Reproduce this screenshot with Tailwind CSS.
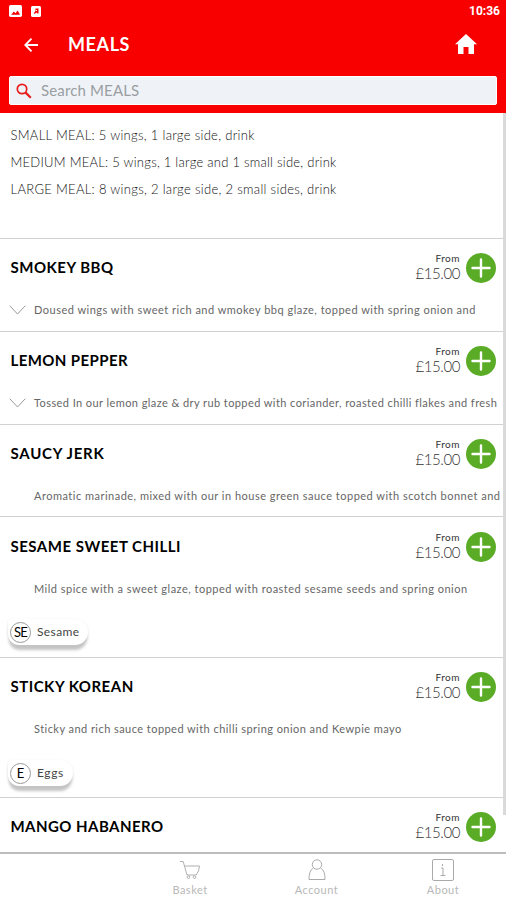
<!DOCTYPE html>
<html lang="en">
<head>
<meta charset="utf-8">
<title>Meals</title>
<script src="https://cdn.jsdelivr.net/npm/@tailwindcss/browser@4"></script>
</head>
<body class="w-[506px] h-[900px] overflow-hidden bg-white font-['Lato','Open_Sans',sans-serif] text-black">
<svg class="hidden">
  <symbol id="plus" viewBox="0 0 30 30"><circle cx="15" cy="15" r="15" fill="#5aac27"/><path d="M15 6.500v17M6.500 15h17" stroke="#fff" stroke-width="2.400" stroke-linecap="round"/></symbol>
  <symbol id="chev" viewBox="0 0 17 10"><path d="M.7.7 8.500 9 16.300.7" fill="none" stroke="#999" stroke-width="1"/></symbol>
</svg>
<div class="relative flex h-[900px] flex-col overflow-hidden">
  <header class="h-[113px] shrink-0 bg-[#f80000] text-white">
    <div class="flex h-[22px] items-center pl-[9px] pr-[6px]">
      <svg class="h-[12px] w-[13px]" viewBox="0 0 12 11"><rect width="12" height="11" rx="1.500" fill="#fff"/><path d="M2 9l2.500-3 1.500 1.500L8 5l2.200 4z" fill="#f80000"/></svg>
      <svg class="ml-[9px] h-[11px] w-[10px]" viewBox="0 0 10 11"><rect width="10" height="11" rx="1.500" fill="#fff"/><path d="M4.500 2.500h3v5h-1l-1-1-2 1.500-.7-.8L4.500 5z" fill="#f80000"/><path d="M5 4.500h1" stroke="#fff"/></svg>
      <span class="ml-auto font-['Roboto',sans-serif] text-[12px] font-bold leading-none">10:36</span>
    </div>
    <div class="flex h-[45px] items-center pl-[24px] pr-[29px]">
      <svg class="h-[14px] w-[14px]" viewBox="0 0 14 14" fill="none" stroke="#fff" stroke-width="1.800"><path d="M7.500.7 1.300 7l6.200 6.300M1.300 7H14"/></svg>
      <h1 class="ml-[30px] pb-px text-[18px] font-bold leading-none tracking-[0.6px]">MEALS</h1>
      <svg class="ml-auto mb-[2px] h-[20px] w-[22px]" viewBox="0 0 22 20"><path d="M11 0 22 10.200h-3V20h-5.500v-7h-5v7H3v-9.800H0z" fill="#fff"/></svg>
    </div>
    <div class="mx-[9px] mt-[9px] flex h-[29px] items-center rounded-[2px] border border-white bg-[#eff3f7] pl-[6px]">
      <svg class="h-[16px] w-[16px]" viewBox="0 0 16 16" fill="none" stroke="#e81c1c"><circle cx="6" cy="6" r="4.700" stroke-width="1.700"/><path d="m9.600 9.600 5.200 5.200" stroke-width="2.200"/></svg>
      <span class="ml-[9px] text-[15px] leading-none tracking-[0.15px] text-[#9a9ea2]">Search MEALS</span>
    </div>
  </header>

  <main class="h-[739px] shrink-0 overflow-hidden">
    <section class="flex h-[125px] flex-col pt-[9px] pl-[10.5px] text-[13px] font-light leading-[27px] text-[#111]">
      <p class="whitespace-nowrap tracking-[0.3px]">SMALL MEAL: 5 wings, 1 large side, drink</p>
      <p class="whitespace-nowrap tracking-[0.25px]">MEDIUM MEAL: 5 wings, 1 large and 1 small side, drink</p>
      <p class="whitespace-nowrap tracking-[0.31px]">LARGE MEAL: 8 wings, 2 large side, 2 small sides, drink</p>
    </section>

    <article class="h-[93px] border-t border-[#d2d2d2]">
      <div class="flex h-[58px] items-center pl-[10.5px] pr-[10px]">
        <h2 class="pb-px text-[15px] font-bold leading-none tracking-[0.5px]">SMOKEY BBQ</h2>
        <div class="ml-auto mr-[6px] pb-[3px] text-right text-[#333]"><p class="text-[10px] leading-[13px] tracking-[0.5px]">From</p><p class="text-[15px] font-light leading-[17px] tracking-[-0.4px]">£15.00</p></div>
        <svg class="size-[30px]"><use href="#plus"/></svg>
      </div>
      <div class="flex h-[24px] items-center pl-[9px]"><svg class="mt-[2px] h-[10px] w-[17px]"><use href="#chev"/></svg><p class="ml-[8px] whitespace-nowrap text-[11px] leading-none tracking-[0.49px] text-[#666]">Doused wings with sweet rich and wmokey bbq glaze, topped with spring onion and</p></div>
    </article>
    <article class="h-[93px] border-t border-[#d2d2d2]">
      <div class="flex h-[58px] items-center pl-[10.5px] pr-[10px]">
        <h2 class="pb-px text-[15px] font-bold leading-none tracking-[0.4px]">LEMON PEPPER</h2>
        <div class="ml-auto mr-[6px] pb-[3px] text-right text-[#333]"><p class="text-[10px] leading-[13px] tracking-[0.5px]">From</p><p class="text-[15px] font-light leading-[17px] tracking-[-0.4px]">£15.00</p></div>
        <svg class="size-[30px]"><use href="#plus"/></svg>
      </div>
      <div class="flex h-[24px] items-center pl-[9px]"><svg class="mt-[2px] h-[10px] w-[17px]"><use href="#chev"/></svg><p class="ml-[8px] whitespace-nowrap text-[11px] leading-none tracking-[0.42px] text-[#666]">Tossed In our lemon glaze &amp; dry rub topped with coriander, roasted chilli flakes and fresh</p></div>
    </article>
    <article class="h-[92px] border-t border-[#d2d2d2]">
      <div class="flex h-[58px] items-center pl-[10.5px] pr-[10px]">
        <h2 class="pb-px text-[15px] font-bold leading-none tracking-[0.75px]">SAUCY JERK</h2>
        <div class="ml-auto mr-[6px] pb-[3px] text-right text-[#333]"><p class="text-[10px] leading-[13px] tracking-[0.5px]">From</p><p class="text-[15px] font-light leading-[17px] tracking-[-0.4px]">£15.00</p></div>
        <svg class="size-[30px]"><use href="#plus"/></svg>
      </div>
      <div class="flex h-[24px] items-center pl-[34px]"><p class="whitespace-nowrap text-[11px] leading-none tracking-[0.49px] text-[#666]">Aromatic marinade, mixed with our in house green sauce topped with scotch bonnet and</p></div>
    </article>
    <article class="h-[141px] border-t border-[#d2d2d2]">
      <div class="flex h-[59px] items-center pl-[10.5px] pr-[10px]">
        <h2 class="text-[15px] font-bold leading-none tracking-[0.5px]">SESAME SWEET CHILLI</h2>
        <div class="ml-auto mr-[6px] pb-[2px] text-right text-[#333]"><p class="text-[10px] leading-[13px] tracking-[0.5px]">From</p><p class="text-[15px] font-light leading-[17px] tracking-[-0.4px]">£15.00</p></div>
        <svg class="size-[30px]"><use href="#plus"/></svg>
      </div>
      <div class="flex h-[24px] items-center pl-[34px]"><p class="whitespace-nowrap text-[11px] leading-none tracking-[0.49px] text-[#666]">Mild spice with a sweet glaze, topped with roasted sesame seeds and spring onion</p></div>
      <div class="mt-[19px] ml-[8px] flex h-[26px] w-[80px] items-center rounded-[4px_14px_14px_12px] bg-white pl-[2px] shadow-[0_6px_3px_-1px_#c4c4c4,0_1px_3px_#e4e4e4]">
        <span class="flex size-[21px] items-center justify-center rounded-full border border-[#999] text-[13px] leading-none tracking-[-0.7px]">SE</span>
        <span class="ml-[6px] text-[12px] leading-none tracking-[0.4px] text-[#444]">Sesame</span>
      </div>
    </article>
    <article class="h-[140px] border-t border-[#d2d2d2]">
      <div class="flex h-[58px] items-center pl-[10.5px] pr-[10px]">
        <h2 class="pb-px text-[15px] font-bold leading-none tracking-[0.5px]">STICKY KOREAN</h2>
        <div class="ml-auto mr-[6px] pb-[3px] text-right text-[#333]"><p class="text-[10px] leading-[13px] tracking-[0.5px]">From</p><p class="text-[15px] font-light leading-[17px] tracking-[-0.4px]">£15.00</p></div>
        <svg class="size-[30px]"><use href="#plus"/></svg>
      </div>
      <div class="flex h-[24px] items-center pl-[34px]"><p class="whitespace-nowrap text-[11px] leading-none tracking-[0.45px] text-[#666]">Sticky and rich sauce topped with chilli spring onion and Kewpie mayo</p></div>
      <div class="mt-[20px] ml-[8px] flex h-[26px] w-[65px] items-center rounded-[4px_14px_14px_12px] bg-white pl-[2px] shadow-[0_6px_3px_-1px_#c4c4c4,0_1px_3px_#e4e4e4]">
        <span class="flex size-[21px] items-center justify-center rounded-full border border-[#999] text-[13px] leading-none">E</span>
        <span class="ml-[6px] text-[12px] leading-none tracking-[0.6px] text-[#444]">Eggs</span>
      </div>
    </article>
    <article class="h-[60px] border-t border-[#d2d2d2]">
      <div class="flex h-[58px] items-center pl-[10.5px] pr-[10px]">
        <h2 class="pb-px text-[15px] font-bold leading-none tracking-[0.45px]">MANGO HABANERO</h2>
        <div class="ml-auto mr-[6px] pb-[3px] text-right text-[#333]"><p class="text-[10px] leading-[13px] tracking-[0.5px]">From</p><p class="text-[15px] font-light leading-[17px] tracking-[-0.4px]">£15.00</p></div>
        <svg class="size-[30px]"><use href="#plus"/></svg>
      </div>
    </article>
  </main>
  <div class="absolute right-0 top-[113px] h-[702px] w-[3px] bg-[#dadada]"></div>

  <nav class="relative flex h-[48px] shrink-0 border-t-2 border-[#bdbdbd] bg-white pl-[127px] text-[11px] leading-none tracking-[0.5px] text-[#b8b8b8]">
    <div class="flex w-[126px] flex-col items-center pt-[6px]">
      <svg class="h-[21px] w-[22px]" viewBox="0 0 22 21" fill="none" stroke="#b0b0b0"><path d="M1 1.500h3.200L8 15h9.200Q20.200 11 20.500 6H5.500"/><circle cx="9.500" cy="17.200" r="1.300"/><circle cx="15.500" cy="17.200" r="1.300"/></svg>
      <span class="mt-[3px]">Basket</span>
    </div>
    <div class="flex w-[127px] flex-col items-center pt-[5px]">
      <svg class="h-[22px] w-[20px]" viewBox="0 0 20 22" fill="none" stroke="#aaa"><circle cx="10" cy="5.500" r="4.700"/><path d="M6.500 9C3 11 2 15 2 20.500h16C18 15 17 11 13.500 9"/></svg>
      <span class="mt-[3px]">Account</span>
    </div>
    <div class="flex w-[126px] flex-col items-center pt-[5px]">
      <svg class="h-[22px] w-[22px]" viewBox="0 0 22 22" fill="none" stroke="#aaa"><rect x=".5" y=".5" width="21" height="21" rx="1.500"/><path d="M9 9h2v7.500M8.500 16.500h5M10.500 5v2"/></svg>
      <span class="mt-[3px]">About</span>
    </div>
  </nav>
</div>
</body>
</html>
